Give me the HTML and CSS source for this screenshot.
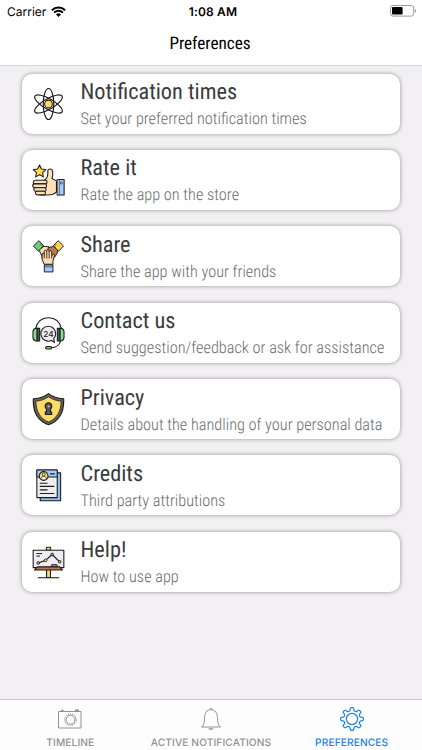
FILE: index.html
```html
<!DOCTYPE html>
<html lang="en">
<head>
    <meta charset="UTF-8">
    <meta name="viewport" content="width=device-width, initial-scale=1.0">
    <title>Preferences</title>
    <link rel="stylesheet" href="styles.css">
</head>
<body>
    <header class="header">
        <div class="status-bar">
            <div class="carrier">
                <span>Carrier</span>
                <svg class="wifi" viewBox="0 0 15 11">
                    <path d="M0.9 4.2a9.4 9.4 0 0 1 13.2 0M3.1 6.6a6.3 6.3 0 0 1 8.8 0" fill="none" stroke="#000" stroke-width="2"/>
                    <path d="M7.5 11L5 8.5a3.6 3.6 0 0 1 5 0z"/>
                </svg>
            </div>
            <div class="clock">1:08 AM</div>
            <svg class="battery" viewBox="0 0 27 12">
                <rect x="0.5" y="0.5" width="23.2" height="10.6" rx="2.5" fill="none" stroke="#999"/>
                <rect x="2" y="2" width="10.6" height="7.6" rx="1"/>
                <path d="M24.8 4v3.7q1.4-.5 1.4-1.9t-1.4-1.8z" fill="#999"/>
            </svg>
        </div>
        <h1>Preferences</h1>
    </header>

    <main class="list">
        <!-- Notification times -->
        <div class="card">
            <svg class="icon" viewBox="0 0 34 34">
                <g fill="none" stroke="#1c1c1c" stroke-width="1.2">
                    <ellipse cx="17" cy="17" rx="5.4" ry="16"/>
                    <ellipse cx="17" cy="17" rx="5.4" ry="16.2" transform="rotate(60 17 17)"/>
                    <ellipse cx="17" cy="17" rx="5.4" ry="16.2" transform="rotate(120 17 17)"/>
                </g>
                <circle cx="17" cy="17" r="4" fill="#fedb67" stroke="#1c1c1c" stroke-width="1.1"/>
            </svg>
            <div class="text">
                <h2>Notification times</h2>
                <p>Set your preferred notification times</p>
            </div>
        </div>

        <!-- Rate it -->
        <div class="card">
            <svg class="icon" viewBox="0 0 34 34" stroke="#1c1c1c" stroke-width="1.1" stroke-linejoin="round">
                <path d="M12 17.5c3-1.5 4.3-4 4.3-7.2V7.5c0-2.6 4.6-2.6 5 .6.4 2.5.1 5-.7 7.4l4.6 2.4v11.6c-2.7 2.4-5.5 3-8.7 3H9z" fill="#ffe0b8"/>
                <path d="M4 17.2h10c2 0 2 3.8 0 3.8H3c-2.6 0-2.3-3.8 1-3.8z" fill="#ffe0b8"/>
                <path d="M3 21h10.5c2 0 2 3.9 0 3.9H3c-3 0-3-3.9 0-3.9z" fill="#ffe0b8"/>
                <path d="M3.6 24.9H13c2 0 2 3.7 0 3.7H4c-2.6 0-3-3.7-.4-3.7z" fill="#ffe0b8"/>
                <path d="M5 28.6h7.4c1.9 0 1.9 3.7 0 3.7H5.6c-2.6 0-2.9-3.7-.6-3.7z" fill="#ffe0b8"/>
                <path d="M26 16.5h7.1v16H26z" fill="#a4ccff"/>
                <path d="M26 16.5h2v16h-2z" fill="#dceaff" stroke-width=".7"/>
                <circle cx="30.2" cy="20" r="1.1" fill="#fff" stroke-width=".8"/>
                <path d="M7.8 1.5l1.9 4.1 4.5.6-3.3 3.1.8 4.5-3.9-2.2-4 2.2.8-4.5L1.3 6.2l4.5-.6z" fill="#fedb41"/>
            </svg>
            <div class="text">
                <h2>Rate it</h2>
                <p>Rate the app on the store</p>
            </div>
        </div>

        <!-- Share -->
        <div class="card">
            <svg class="icon" viewBox="0 0 34 34" stroke="#1c1c1c" stroke-width="1" stroke-linejoin="round">
                <path d="M7.5 10l4.5-2.8 5.5.3 1.5 4-2.5 7-5.5-.5-2.5-4z" fill="#ffe0b8"/>
                <path d="M26.5 10l-4.2-2.8-5.3 1-1.6 4.3 3.6 6.5 4.5-1 2.5-4z" fill="#bc7a4b"/>
                <path d="M12.4 25.5l-2.2-5.8v-4.2c0-1.8 2.4-1.8 2.4 0v-3c0-1.8 2.5-1.8 2.5 0v-.8c0-1.8 2.6-1.8 2.6 0v1c0-1.8 2.5-1.8 2.5 0V17l1-1.5c1.3-1 2.6.3 1.8 1.4l-1.4 5.4v3.2z" fill="#ffdcb0"/>
                <path d="M10.5 14.5v5M12.7 13v6.5M15.2 12v7.5M17.7 12v7.5M20.2 13.5v6" stroke="#674b3c" stroke-width="1.2"/>
                <path d="M1.5 6.7l5.6-5.5 5 5.4-5.6 5.4z" fill="#70cb75"/>
                <path d="M32.5 6.7l-5.6-5.5-5 5.4 5.6 5.4z" fill="#fed354"/>
                <path d="M8.8 4.8l2.3 2.4-1.8 1.7M25.2 4.8l-2.3 2.4 1.8 1.7" fill="none" stroke-width=".6"/>
                <path d="M12.7 26.2h8.9v7.2h-8.9z" fill="#a4ccff"/>
                <path d="M12.7 28.2h8.9" stroke-width=".6"/>
            </svg>
            <div class="text">
                <h2>Share</h2>
                <p>Share the app with your friends</p>
            </div>
        </div>

        <!-- Contact us -->
        <div class="card">
            <svg class="icon" viewBox="0 0 34 34" stroke="#1c1c1c" stroke-width="1.1">
                <path d="M3.8 12.5C5.4 4.7 10.6 1.2 17 1.2s11.6 3.5 13.2 11.3" fill="none"/>
                <path d="M29.5 25.2c-1.3 4.5-4 7-9.8 7" fill="none"/>
                <path d="M17 10a7.7 7.7 0 1 0 3 14.7l3 1.9-.5-4A7.7 7.7 0 0 0 17 10z" fill="#eeeef2"/>
                <text x="17" y="20.7" text-anchor="middle" class="icon-number">24</text>
                <path d="M5.3 12.2H3.8Q1 13 1 16v5.5q0 3 2.8 3.7h1.5z" fill="#82dc93"/>
                <path d="M28.7 12.2h1.5q2.8.8 2.8 3.8v5.5q0 3-2.8 3.7h-1.5z" fill="#82dc93"/>
                <path d="M5.3 12.2h2.6v13H5.3zM26.1 12.2h2.6v13h-2.6z" fill="#555"/>
                <rect x="14" y="30.9" width="6.3" height="2.5" rx="1.2" fill="#70ca80"/>
            </svg>
            <div class="text">
                <h2>Contact us</h2>
                <p>Send suggestion/feedback or ask for assistance</p>
            </div>
        </div>

        <!-- Privacy -->
        <div class="card">
            <svg class="icon" viewBox="0 0 34 34" stroke="#1c1c1c" stroke-linejoin="round">
                <path d="M17 1.2c4.3 3.5 9.5 5 15.6 5.2C33.2 19 28.5 29 17 33.2 5.5 29 .8 19 1.4 6.4 7.5 6.2 12.7 4.7 17 1.2z" fill="#66615d" stroke-width="1.2"/>
                <path d="M17 4.4C21 7.2 25.4 8.6 30 8.9c-.1 10.6-4.4 18-13 21.5C8.4 26.9 4.1 19.5 4 8.9 8.6 8.6 13 7.2 17 4.4z" fill="#fedb67" stroke-width=".8"/>
                <path d="M13.5 14.5a3.5 3.5 0 1 1 5.6 2.4v3.2h1.2v2.5h-6.6v-2.5h1.2v-3.2a3.5 3.5 0 0 1-1.4-2.4z" fill="#57565c" stroke-width="1.1"/>
                <circle cx="17" cy="14.3" r=".9" fill="#fedb67" stroke="none"/>
            </svg>
            <div class="text">
                <h2>Privacy</h2>
                <p>Details about the handling of your personal data</p>
            </div>
        </div>

        <!-- Credits -->
        <div class="card">
            <svg class="icon" viewBox="0 0 34 34" stroke="#1c1c1c" stroke-width="1.1" stroke-linejoin="round">
                <path d="M8.5 4.5h21v28.8h-21z" fill="#8dbff5"/>
                <path d="M5 1.5h21v28.5H5z" fill="#eeeef2"/>
                <path d="M5 1.5h21v7.3H5z" fill="#a4ccff"/>
                <path d="M18.5 5.6h5M8 15.2h8M8 18.5h15M8 22h8M8 25.8h15" stroke-width="1.2"/>
                <circle cx="12" cy="7.7" r="4.5" fill="#fedb67"/>
                <circle cx="12" cy="6.2" r="1.5" fill="#ffe8c5" stroke-width=".8"/>
                <path d="M9.2 10.8c.3-3.4 5.3-3.4 5.6 0" fill="#fff" stroke-width=".8"/>
            </svg>
            <div class="text">
                <h2>Credits</h2>
                <p>Third party attributions</p>
            </div>
        </div>

        <!-- Help! -->
        <div class="card">
            <svg class="icon" viewBox="0 0 34 34" stroke="#1c1c1c" stroke-width="1.1" stroke-linejoin="round">
                <path d="M14.8 4.8V2.6q0-.8.8-.8h2.8q.8 0 .8.8v2.2z" fill="#fedb67"/>
                <path d="M15 24h4v9h-4z" fill="#fedb67"/>
                <path d="M1.2 4.8h31.6v18H1.2z" fill="#eeeef2"/>
                <path d="M4.5 8.3h6M4.5 10.9h3.8" stroke-width="1"/>
                <path d="M6.5 18l7.5-2.7 6.8-6 7.7 7.5" fill="none" stroke-width="1.2"/>
                <path d="M20 22v-1.7q0-.8.8-.8h4.4q.8 0 .8.8V22z" fill="#73839b" stroke-width=".8"/>
                <path d="M5.5 22h23l3 3.3h-29z" fill="#be7549"/>
                <circle cx="6.5" cy="18" r="1.4" fill="#f1a583" stroke-width=".9"/>
                <circle cx="14" cy="15.3" r="1.4" fill="#fedb67" stroke-width=".9"/>
                <circle cx="20.8" cy="9.3" r="1.4" fill="#849baf" stroke-width=".9"/>
                <circle cx="28.5" cy="16.8" r="1.4" fill="#f1a583" stroke-width=".9"/>
                <path d="M6 33.2h22"/>
            </svg>
            <div class="text">
                <h2>Help!</h2>
                <p>How to use app</p>
            </div>
        </div>
    </main>

    <nav class="tabs">
        <div class="tab">
            <svg viewBox="0 0 26 26" fill="none" stroke="currentColor">
                <path d="M1.5 5.5H24V22H1.5z"/>
                <path d="M4 4.4h2.5M18 4.3h4" stroke-width="1.5"/>
                <circle cx="13.5" cy="13.8" r="4.4"/>
                <circle cx="13.5" cy="13.8" r="5.7" stroke-width="1.5" stroke-dasharray=".8 1.18"/>
            </svg>
            <span>TIMELINE</span>
        </div>
        <div class="tab">
            <svg viewBox="0 0 26 26" fill="none" stroke="currentColor" stroke-linejoin="round">
                <path d="M3.5 21c2.4-2.2 3-4.5 3-8.6C6.5 7 8.8 3.7 13 3.7s6.5 3.3 6.5 8.7c0 4.1.6 6.4 3 8.6z"/>
                <path d="M11.8 3.5c0-1.5 2.4-1.5 2.4 0"/>
                <path d="M10.4 22.2h5.2c-.5 2-4.7 2-5.2 0z" fill="currentColor" stroke="none"/>
            </svg>
            <span>ACTIVE NOTIFICATIONS</span>
        </div>
        <div class="tab active">
            <svg viewBox="0 0 26 26" fill="none" stroke="currentColor" stroke-width="1.2" stroke-linejoin="round">
                <circle cx="13" cy="13" r="5.6"/>
                <path id="gear" d=""/>
            </svg>
            <span>PREFERENCES</span>
        </div>
    </nav>

    <script>
        // gear outline with eight rounded teeth
        const points = [];
        for (let a = 0; a < 360; a += 3) {
            const t = a * Math.PI / 180;
            const r = 9.8 + 1.6 * Math.tanh(2.5 * Math.cos(8 * t));
            points.push((13 + r * Math.cos(t)).toFixed(2) + " " + (13 + r * Math.sin(t)).toFixed(2));
        }
        document.getElementById("gear").setAttribute("d", "M" + points.join("L") + "z");
    </script>
</body>
</html>
```
FILE: styles.css
```css
* {
    box-sizing: border-box;
}
body {
    margin: 0;
    height: 750px;
    display: flex;
    flex-direction: column;
    background-color: #f2f0f2;
    font-family: "Roboto Condensed", Roboto, sans-serif;
    font-stretch: 75%;
    text-rendering: geometricPrecision;
    overflow: hidden;
}
h1, h2, p {
    margin: 0;
}
.header {
    height: 66px;
    background-color: white;
    border-bottom: 1px solid #d5d4d6;
}
.status-bar {
    height: 22px;
    padding: 0 5px 0 7px;
    display: grid;
    grid-template-columns: 1fr auto 1fr;
    align-items: center;
    font-family: Inter, sans-serif;
    font-stretch: normal;
    font-size: 12px;
}
.carrier {
    display: flex;
    align-items: center;
    gap: 5px;
}
.wifi {
    width: 15px;
    height: 11px;
}
.clock {
    padding-left: 2px;
    font-weight: 600;
    letter-spacing: 0.15px;
}
.battery {
    width: 27px;
    height: 12px;
    justify-self: end;
}
.header h1 {
    padding-right: 2px;
    font-size: 17.2px;
    font-weight: 400;
    line-height: 44px;
    text-align: center;
}
.list {
    flex: 1;
    padding: 7.5px 22px 0;
    display: flex;
    flex-direction: column;
    gap: 16.4px;
}
.card {
    height: 60px;
    padding-left: 9.5px;
    display: flex;
    gap: 16px;
    background-color: white;
    border-radius: 10px;
    box-shadow: 0 0 4px rgba(0, 0, 0, 0.4);
}
.icon {
    width: 33px;
    height: 34px;
    margin-top: 13px;
}
.icon-number {
    font: 500 8.5px Inter, sans-serif;
    fill: #1c1c1c;
    stroke: none;
}
.text {
    padding-top: 4.6px;
}
.text h2 {
    font-size: 22.3px;
    font-weight: 400;
    line-height: 28px;
    color: #3b3b3d;
}
.text p {
    font-size: 16.3px;
    font-weight: 300;
    line-height: 26px;
    color: #6c6c6e;
    white-space: nowrap;
}
.tabs {
    height: 51px;
    display: grid;
    grid-template-columns: repeat(3, 1fr);
    background-color: #fdfdfd;
    border-top: 1px solid #c9c8ca;
    color: #929292;
    font-family: Inter, sans-serif;
    font-stretch: normal;
}
.tab {
    padding-top: 6px;
    display: flex;
    flex-direction: column;
    align-items: center;
    font-size: 10.2px;
    font-weight: 500;
    line-height: 12px;
    letter-spacing: 0.1px;
}
.tab svg {
    width: 26px;
    height: 26px;
    margin-bottom: 5px;
}
.active {
    color: #1a80e8;
}
```
